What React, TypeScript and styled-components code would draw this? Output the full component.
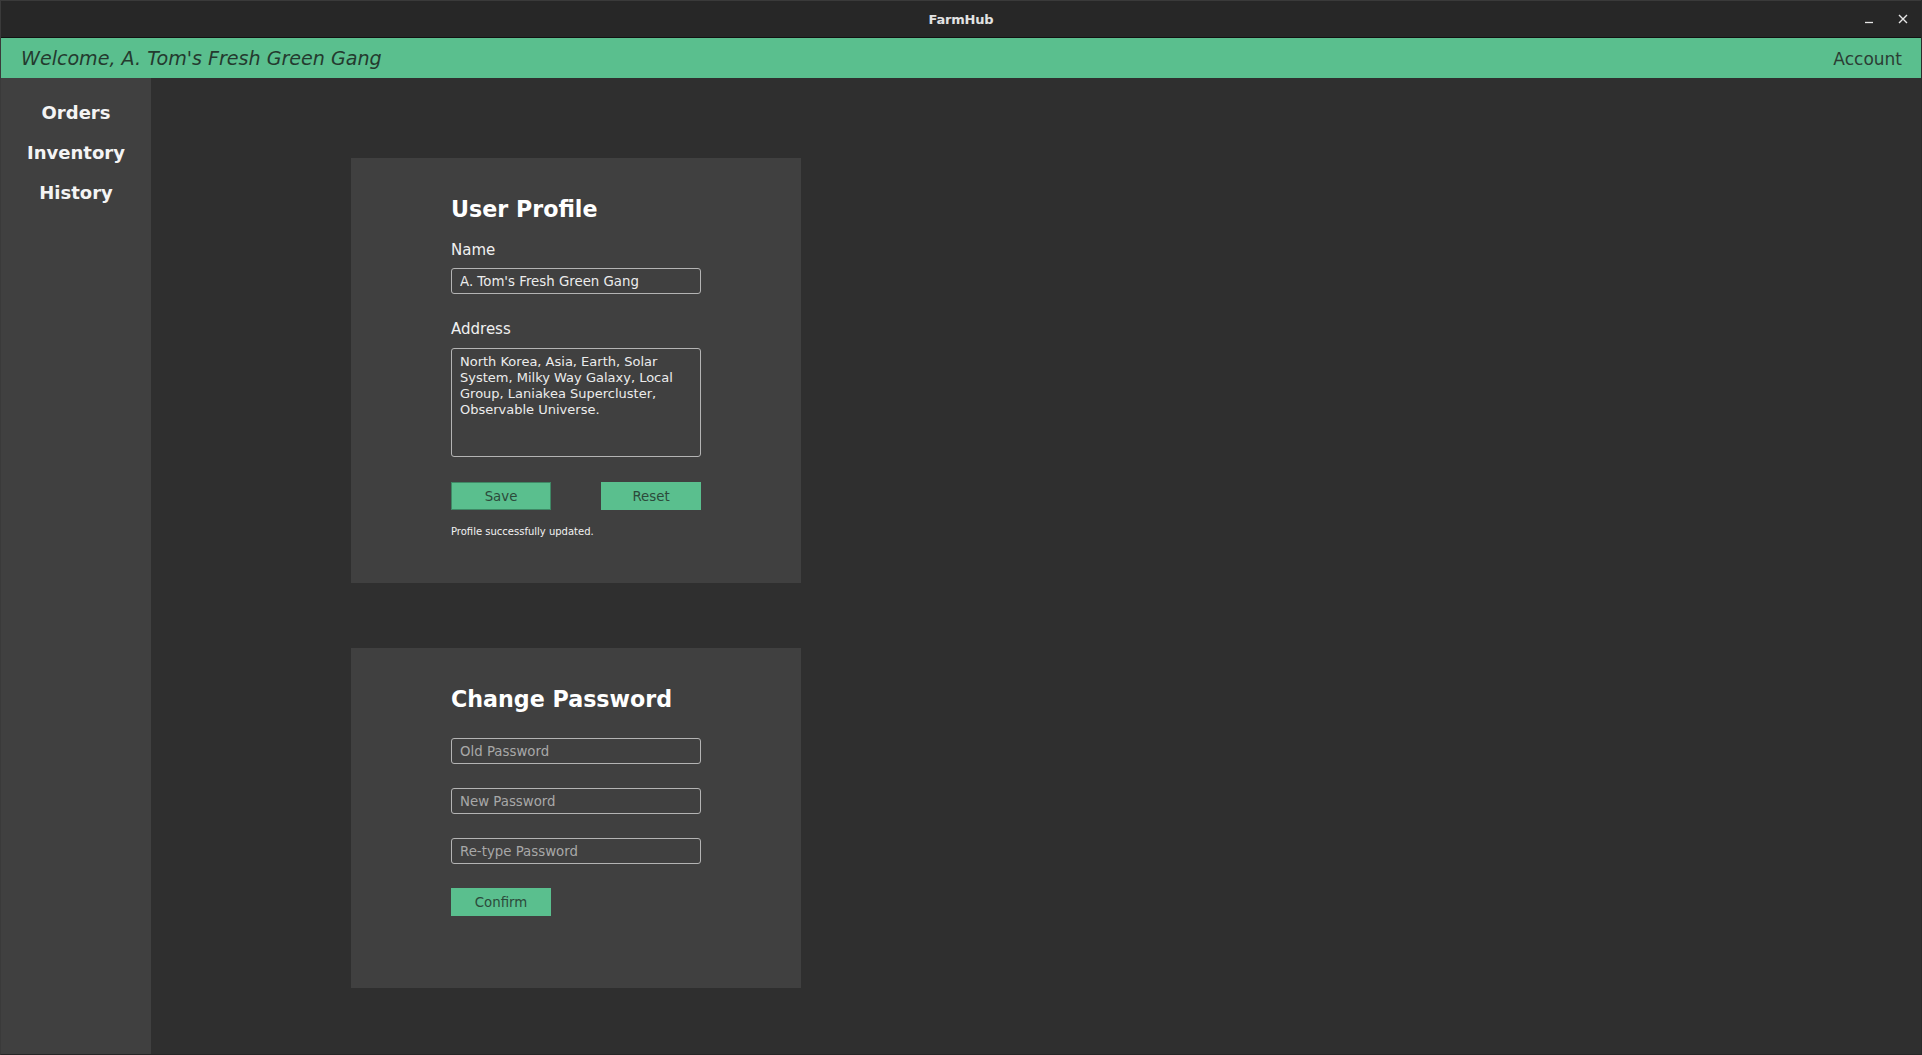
import React from "react";
import styled, { createGlobalStyle } from "styled-components";

const GlobalStyle = createGlobalStyle`
  html, body { margin: 0; padding: 0; background: #2f2f2f; }
  body { font-family: "DejaVu Sans", "Liberation Sans", sans-serif; }
  * { box-sizing: border-box; }
`;

const Frame = styled.div`
  width: 1922px;
  height: 1055px;
  display: flex;
  flex-direction: column;
  background: #2f2f2f;
  border-left: 1px solid #3a3a3a;
  border-right: 1px solid #2a2a2a;
  border-bottom: 1px solid #262626;
  overflow: hidden;
`;

const TitleBar = styled.div`
  height: 38px;
  flex: none;
  position: relative;
  display: flex;
  align-items: center;
  justify-content: center;
  background: #272727;
  border-top: 1px solid #3a3a3a;
  border-bottom: 1px solid #121212;
`;

const TitleText = styled.span`
  font-size: 13px;
  font-weight: bold;
  color: #e2e2e2;
  letter-spacing: -0.2px;
`;

const WindowControls = styled.div`
  position: absolute;
  right: 10px;
  top: 0;
  height: 100%;
  display: flex;
  align-items: center;
  gap: 18px;
`;

const ControlButton = styled.div`
  width: 16px;
  height: 16px;
  display: flex;
  align-items: center;
  justify-content: center;
`;

const Header = styled.header`
  height: 40px;
  flex: none;
  display: flex;
  align-items: center;
  justify-content: space-between;
  padding: 1px 19px 0 20px;
  background: #5abf8e;
`;

const Welcome = styled.div`
  font-size: 19.1px;
  font-style: italic;
  color: #243a2f;
`;

const AccountLink = styled.div`
  font-size: 17px;
  color: #2b3d34;
`;

const Body = styled.div`
  flex: 1;
  display: flex;
  min-height: 0;
`;

const Sidebar = styled.nav`
  width: 150px;
  flex: none;
  background: #404040;
  padding-top: 15px;
  display: flex;
  flex-direction: column;
`;

const NavItem = styled.div`
  height: 40px;
  line-height: 40px;
  text-align: center;
  font-size: 18px;
  font-weight: bold;
  color: #f4f4f4;
`;

const Main = styled.main`
  flex: 1;
  padding: 80px 0 0 200px;
  display: flex;
  flex-direction: column;
  gap: 65px;
`;

const Card = styled.section<{ $height: number }>`
  width: 450px;
  height: ${(p) => p.$height}px;
  background: #404040;
  padding: 37px 100px 0 100px;
  display: flex;
  flex-direction: column;
`;

const CardTitle = styled.h2`
  margin: 0;
  font-size: 22.2px;
  line-height: 28px;
  font-weight: bold;
  color: #ffffff;
`;

const Label = styled.label<{ $mt: number }>`
  display: block;
  margin-top: ${(p) => p.$mt}px;
  font-size: 15px;
  line-height: 19px;
  color: #f0f0f0;
`;

const TextInput = styled.input<{ $mt: number }>`
  display: block;
  width: 250px;
  height: 26px;
  margin-top: ${(p) => p.$mt}px;
  padding: 0 8px;
  border: 1px solid #b4b4b4;
  border-radius: 3px;
  background: transparent;
  color: #ececec;
  font-family: "DejaVu Sans", sans-serif;
  font-size: 13.33px;
  outline: none;
  &::placeholder { color: #a8a8a8; }
`;

const TextArea = styled.textarea`
  display: block;
  width: 250px;
  height: 109px;
  margin-top: 9px;
  padding: 5px 8px 3px 8px;
  border: 1px solid #b4b4b4;
  border-radius: 3px;
  background: transparent;
  color: #ececec;
  font-family: "DejaVu Sans", sans-serif;
  font-size: 13px;
  line-height: 16px;
  resize: none;
  outline: none;
`;

const ButtonRow = styled.div`
  width: 250px;
  margin-top: 25px;
  display: flex;
  justify-content: space-between;
`;

const Button = styled.button<{ $focused?: boolean; $mt?: number }>`
  width: 100px;
  height: 28px;
  margin-top: ${(p) => p.$mt ?? 0}px;
  border: 1px solid ${(p) => (p.$focused ? "#3f8865" : "#5abf8e")};
  background: #5abf8e;
  color: #2c4a3b;
  font-family: "DejaVu Sans", sans-serif;
  font-size: 13.33px;
  padding: 0;
  cursor: pointer;
`;

const Message = styled.p`
  margin: 15px 0 0 0;
  font-size: 10px;
  line-height: 14px;
  color: #f2f2f2;
`;

export default function App() {
  return (
    <>
      <GlobalStyle />
      <Frame>
        <TitleBar>
          <TitleText>FarmHub</TitleText>
          <WindowControls>
            <ControlButton>
              <svg width="12" height="12" viewBox="0 0 12 12">
                <line x1="2" y1="9.5" x2="10" y2="9.5" stroke="#e6e6e6" strokeWidth="1.3" />
              </svg>
            </ControlButton>
            <ControlButton>
              <svg width="12" height="12" viewBox="0 0 12 12">
                <path d="M2 2 L10 10 M10 2 L2 10" stroke="#e6e6e6" strokeWidth="1.4" />
              </svg>
            </ControlButton>
          </WindowControls>
        </TitleBar>
        <Header>
          <Welcome>Welcome, A. Tom's Fresh Green Gang</Welcome>
          <AccountLink>Account</AccountLink>
        </Header>
        <Body>
          <Sidebar>
            <NavItem>Orders</NavItem>
            <NavItem>Inventory</NavItem>
            <NavItem>History</NavItem>
          </Sidebar>
          <Main>
            <Card $height={425}>
              <CardTitle>User Profile</CardTitle>
              <Label $mt={18}>Name</Label>
              <TextInput $mt={8} defaultValue="A. Tom's Fresh Green Gang" />
              <Label $mt={26}>Address</Label>
              <TextArea defaultValue="North Korea, Asia, Earth, Solar System, Milky Way Galaxy, Local Group, Laniakea Supercluster, Observable Universe." />
              <ButtonRow>
                <Button $focused>Save</Button>
                <Button>Reset</Button>
              </ButtonRow>
              <Message>Profile successfully updated.</Message>
            </Card>
            <Card $height={340}>
              <CardTitle>Change Password</CardTitle>
              <TextInput $mt={25} placeholder="Old Password" />
              <TextInput $mt={24} placeholder="New Password" />
              <TextInput $mt={24} placeholder="Re-type Password" />
              <Button $mt={24}>Confirm</Button>
            </Card>
          </Main>
        </Body>
      </Frame>
    </>
  );
}
